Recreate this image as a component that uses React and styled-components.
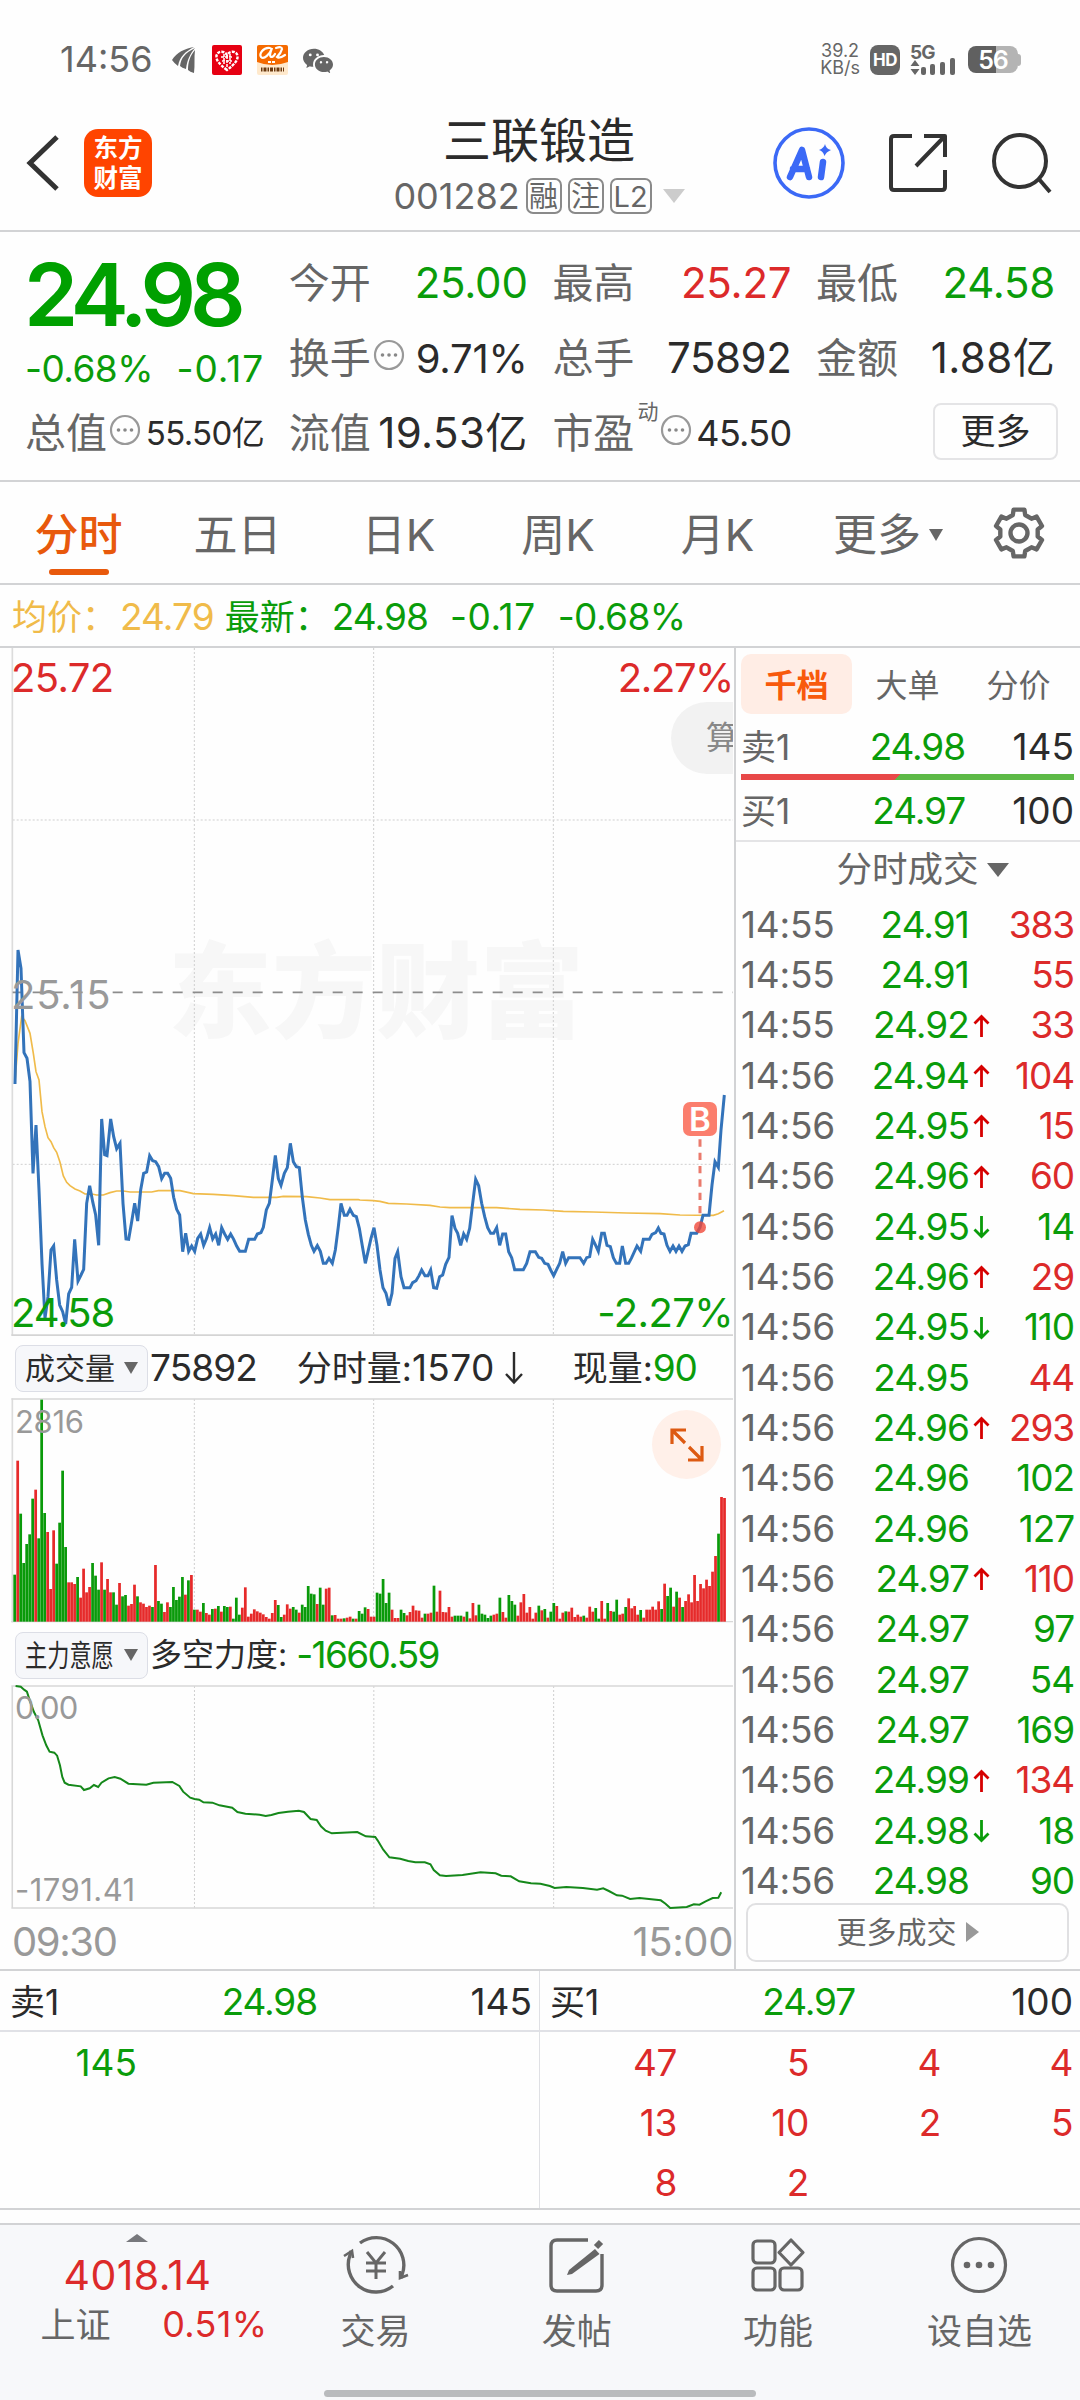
import React from "react";
import styled, { createGlobalStyle } from "styled-components";
import { BsWechat } from "react-icons/bs";

const GREEN = "#0a9c0a";
const RED = "#dc2a2a";
const GREY = "#666";
const DARK = "#2b2b2b";
const LIGHT = "#999";
const ORANGE = "#e8590c";
const LINE = "#d2d3d5";

const Global = createGlobalStyle`
  * { box-sizing: border-box; }
  body { margin: 0; background: #fdfdfd; }
`;

const Page = styled.div`
  width: 1080px;
  height: 2400px;
  display: flex;
  flex-direction: column;
  overflow: hidden;
  background: #fefefe;
  font-family: Inter, "Noto Sans CJK SC", sans-serif;
  color: ${DARK};
`;

const T = styled.span`
  display: inline-block;
  flex: none;
  font-size: ${(p) => p.$s || 37}px;
  font-weight: ${(p) => p.$w || 400};
  letter-spacing: ${(p) => (p.$ls === undefined ? -0.03 : p.$ls)}em;
  color: ${(p) => p.$c || DARK};
  line-height: 1.1;
  white-space: nowrap;
  margin-left: ${(p) => p.$ml || 0}px;
`;

const Cn = styled(T)`
  letter-spacing: ${(p) => p.$ls || 0}em;
`;

/* ---------- status bar ---------- */
const StatusBar = styled.div`
  height: 100px;
  padding: 19px 59px 0 60px;
  display: flex;
  align-items: center;
  justify-content: space-between;
`;
const StatusGroup = styled.div`
  display: flex;
  align-items: center;
  gap: ${(p) => p.$gap}px;
`;
const NetSpeed = styled.div`
  display: flex;
  flex-direction: column;
  align-items: center;
  gap: 1px;
`;
const SpeedText = styled.span`
  font-size: 18px;
  line-height: 16px;
  color: ${GREY};
`;
const HdBadge = styled.div`
  width: 30px;
  height: 30px;
  border-radius: 8px;
  background: #666;
  color: #fff;
  font-size: 17px;
  font-weight: 700;
  letter-spacing: -0.5px;
  display: flex;
  align-items: center;
  justify-content: center;
`;
const Battery = styled.div`
  width: 50px;
  height: 27px;
  border-radius: 8px;
  background: linear-gradient(90deg, #606060 56%, #b4b4b4 56%);
  color: #fff;
  font-size: 25px;
  font-weight: 600;
  letter-spacing: -1px;
  display: flex;
  align-items: center;
  justify-content: center;
`;
const BatteryTip = styled.div`
  width: 3px;
  height: 12px;
  margin-left: -10px;
  border-radius: 0 3px 3px 0;
  background: #b4b4b4;
`;

/* ---------- title bar ---------- */
const TitleBar = styled.div`
  height: 132px;
  padding: 0 28px 4px 26px;
  display: grid;
  grid-template-columns: 325px 1fr 325px;
  align-items: center;
  border-bottom: 2px solid ${LINE};
`;
const TitleSide = styled.div`
  display: flex;
  align-items: center;
  gap: ${(p) => p.$gap}px;
  justify-content: ${(p) => (p.$end ? "flex-end" : "flex-start")};
`;
const AppLogo = styled.div`
  width: 68px;
  height: 68px;
  border-radius: 14px;
  background: #ff4400;
  color: #fff;
  display: flex;
  align-items: center;
  justify-content: center;
  text-align: center;
  font-size: 24.5px;
  font-weight: 700;
  line-height: 30px;
`;
const TitleCenter = styled.div`
  display: flex;
  flex-direction: column;
  align-items: center;
  gap: 9px;
  padding-top: 5px;
`;
const CodeRow = styled.div`
  display: flex;
  align-items: center;
  gap: 6px;
`;
const Tag = styled.div`
  height: 36px;
  width: ${(p) => p.$w}px;
  border: 2px solid #8a8a8a;
  border-radius: 7px;
  color: ${GREY};
  font-size: 29px;
  line-height: 1;
  display: flex;
  align-items: center;
  justify-content: center;
`;
const Tri = styled.div`
  width: 0;
  height: 0;
  margin-left: ${(p) => p.$ml || 0}px;
  border-left: ${(p) => p.$w / 2}px solid transparent;
  border-right: ${(p) => p.$w / 2}px solid transparent;
  border-top: ${(p) => (p.$up ? 0 : p.$h)}px solid ${(p) => p.$c};
  border-bottom: ${(p) => (p.$up ? p.$h : 0)}px solid ${(p) => p.$c};
`;

/* ---------- quote ---------- */
const Quote = styled.div`
  height: 250px;
  padding: 14px 26px 0 26px;
  display: grid;
  grid-template-columns: repeat(4, 238px);
  grid-template-rows: repeat(3, 75px);
  column-gap: 25.7px;
  border-bottom: 2px solid ${LINE};
`;
const LastPrice = styled.div`
  grid-row: 1 / 3;
  display: flex;
  flex-direction: column;
  padding-top: 1px;
  margin-left: -2px;
`;
const ChangeRow = styled.div`
  display: flex;
  justify-content: space-between;
  margin-top: 6px;
  padding-left: 1px;
`;
const Cell = styled.div`
  display: flex;
  align-items: center;
  justify-content: space-between;
`;
const CellLabel = styled.div`
  display: flex;
  align-items: center;
  margin-left: -1px;
`;
const Sup = styled.span`
  align-self: flex-start;
  margin: -10px 0 0 3px;
  font-size: 21px;
  line-height: 1;
  color: ${GREY};
`;
const MoreButton = styled.div`
  margin: -5px -3px 0 auto;
  width: 125px;
  height: 57px;
  border: 2px solid #e4e4e6;
  border-radius: 8px;
  display: flex;
  align-items: center;
  justify-content: center;
`;

/* ---------- tabs ---------- */
const Tabs = styled.div`
  height: 103px;
  display: flex;
  border-bottom: 2px solid ${LINE};
`;
const Tab = styled.div`
  width: ${(p) => p.$w}px;
  display: flex;
  flex-direction: column;
  align-items: center;
  padding-top: ${(p) => p.$pt || 29}px;
`;
const TabLine = styled.div`
  display: flex;
  align-items: center;
`;
const Underline = styled.div`
  width: 60px;
  height: 6px;
  margin-top: 10px;
  border-radius: 3px;
  background: ${ORANGE};
`;
const AvgRow = styled.div`
  height: 63px;
  padding: 4px 0 0 12px;
  display: flex;
  align-items: center;
  border-bottom: 2px solid ${LINE};
`;

/* ---------- main area ---------- */
const Main = styled.div`
  height: 1323px;
  display: flex;
  border-bottom: 2px solid ${LINE};
`;
const Charts = styled.div`
  width: 736px;
  display: flex;
  flex-direction: column;
  border-right: 2px solid ${LINE};
`;
const ChartBox = styled.div`
  position: relative;
  height: ${(p) => p.$h}px;
  width: 733px;
  overflow: hidden;
  svg { display: block; }
`;
const Over = styled.div`
  position: absolute;
  left: ${(p) => (p.$l === undefined ? "auto" : p.$l + "px")};
  right: ${(p) => (p.$r === undefined ? "auto" : p.$r + "px")};
  top: ${(p) => p.$t}px;
  display: flex;
`;
const Watermark = styled.div`
  position: absolute;
  left: 168px;
  top: 284px;
  font-size: 104px;
  line-height: 120px;
  font-weight: 900;
  color: #f7f7f7;
`;
const CalcPill = styled.div`
  position: absolute;
  left: 671px;
  top: 54px;
  width: 110px;
  height: 72px;
  border-radius: 36px;
  background: #f2f2f2;
  padding: 18px 0 0 35px;
`;
const MarkerB = styled.div`
  position: absolute;
  left: 683px;
  top: 454px;
  width: 34px;
  height: 34px;
  border-radius: 7px;
  background: #fb7e6d;
  color: #fff;
  font-size: 33px;
  font-weight: 600;
  display: flex;
  align-items: center;
  justify-content: center;
`;
const ExpandButton = styled.div`
  position: absolute;
  left: 652px;
  top: 12px;
  width: 69px;
  height: 69px;
  border-radius: 50%;
  background: #fff0e9;
  display: flex;
  align-items: center;
  justify-content: center;
`;
const IndicatorRow = styled.div`
  height: 62px;
  padding: 2px 0 0 15px;
  display: flex;
  align-items: center;
`;
const Picker = styled.div`
  width: 133px;
  height: 47px;
  border: 1px solid #dcdee6;
  border-radius: 8px;
  background: #f6f7fa;
  display: flex;
  align-items: center;
  justify-content: space-between;
  padding: 0 9px 0 9px;
`;
const Squeezed = styled.div`
  width: 88px;
  transform: scaleX(0.74);
  transform-origin: 0 50%;
`;
const TimeAxis = styled.div`
  flex: 1;
  padding: 11px 1px 0 12px;
  display: flex;
  justify-content: space-between;
`;

/* ---------- order panel ---------- */
const Side = styled.div`
  width: 344px;
  padding: 6px 0 0 5px;
`;
const SideTabs = styled.div`
  display: flex;
  height: 60px;
`;
const SideTab = styled.div`
  width: 111px;
  padding-top: 3px;
  display: flex;
  align-items: center;
  justify-content: center;
  border-radius: 10px;
  background: ${(p) => (p.$on ? "#ffede5" : "transparent")};
`;
const Level = styled.div`
  height: 60px;
  padding: ${(p) => p.$pt || 0}px 6px 0 0;
  display: grid;
  grid-template-columns: 90px 134px 1fr;
  align-items: center;
  justify-items: end;
`;
const Start = styled.div`
  justify-self: start;
  display: flex;
`;
const RatioBar = styled.div`
  width: 333px;
  height: 6px;
  background: linear-gradient(135deg, #e84848 47%, #5cb946 47%);
`;
const Divider = styled.div`
  height: 2px;
  margin-left: -5px;
  background: #e4e4e6;
`;
const TicksTitle = styled.div`
  height: 58px;
  display: flex;
  align-items: center;
  justify-content: center;
  padding: 0 0 2px 24px;
`;
const Tick = styled.div`
  height: 50.34px;
  display: grid;
  grid-template-columns: 100px 128px 21px 1fr;
  align-items: center;
  justify-items: end;
  padding-right: 6px;
`;
const MoreTicks = styled.div`
  margin: -4px 0 0 5px;
  width: 323px;
  height: 59px;
  border: 2px solid #e0e0e2;
  border-radius: 10px;
  background: #fefefe;
  display: flex;
  align-items: center;
  justify-content: center;
  gap: 9px;
`;

/* ---------- queue ---------- */
const Queue = styled.div`
  height: 239px;
  display: flex;
  border-bottom: 2px solid ${LINE};
`;
const QueueSide = styled.div`
  width: 540px;
  border-right: ${(p) => (p.$line ? "1px solid #dfe0e4" : "none")};
`;
const QueueHead = styled.div`
  height: 61px;
  padding: 4px 7px 0 10px;
  display: grid;
  grid-template-columns: 90px ${(p) => p.$mid || 217}px 1fr;
  align-items: center;
  justify-items: end;
  border-bottom: 2px solid #e0e1e6;
`;
const QueueGrid = styled.div`
  padding: 1px 7px 0 5px;
  display: grid;
  grid-template-columns: repeat(4, 132px);
  grid-auto-rows: 60px;
  align-items: center;
  justify-items: end;
`;

/* ---------- bottom nav ---------- */
const Nav = styled.div`
  margin-top: 13px;
  flex: 1;
  background: #f7f8fa;
  border-top: 2px solid ${LINE};
  display: flex;
  flex-direction: column;
`;
const NavRow = styled.div`
  flex: 1;
  display: flex;
`;
const IndexBox = styled.div`
  width: 275px;
  padding-top: 9px;
  display: flex;
  flex-direction: column;
  align-items: center;
  gap: 11px;
`;
const IndexLine = styled.div`
  display: flex;
  align-items: center;
  justify-content: space-between;
  width: 227px;
  margin: -4px 0 0 33px;
`;
const NavItem = styled.div`
  width: 201.3px;
  padding-top: 10px;
  display: flex;
  flex-direction: column;
  align-items: center;
  gap: 17px;
`;
const HomeBar = styled.div`
  width: 432px;
  height: 7px;
  margin: 0 auto 3px;
  border-radius: 4px;
  background: #b9bbbd;
`;

/* ---------- icons ---------- */
const DotsIcon = styled.svg`
  margin: -8px 0 0 2px;
`;
const Dots = () => (
  <DotsIcon width="32" height="32" viewBox="0 0 32 32">
    <circle cx="16" cy="16" r="14" fill="none" stroke="#999" strokeWidth="2.2" />
    <g fill="#888">
      <circle cx="9.5" cy="16" r="1.8" />
      <circle cx="16" cy="16" r="1.8" />
      <circle cx="22.5" cy="16" r="1.8" />
    </g>
  </DotsIcon>
);

const gearPath = () => {
  const out = [];
  for (let k = 0; k < 6; k++) {
    const base = -90 + k * 60;
    [[-19, 19], [-13, 24], [13, 24], [19, 19]].forEach(([d, r]) => {
      const a = ((base + d) * Math.PI) / 180;
      out.push(`${(27 + r * Math.cos(a)).toFixed(1)} ${(27 + r * Math.sin(a)).toFixed(1)}`);
    });
  }
  return `M${out.join("L")}Z`;
};
const Gear = () => (
  <svg width="54" height="54" viewBox="0 0 54 54" fill="none" stroke="#666" strokeWidth="4.4" strokeLinejoin="round">
    <path d={gearPath()} />
    <circle cx="27" cy="27" r="8.5" />
  </svg>
);

const ArrowIcon = styled.svg`
  display: block;
  transform: ${(p) => (p.$down ? "rotate(180deg)" : "none")};
`;
const Arrow = ({ dir }) => (
  <ArrowIcon $down={dir === "d"} width="17" height="24" viewBox="0 0 17 24" fill="none" stroke={dir === "u" ? "#d60000" : GREEN} strokeWidth="2.8">
    <path d="M8.5 23V3M1.5 9.5L8.5 2.5L15.5 9.5" />
  </ArrowIcon>
);

const DownArrow = styled.svg`
  margin-left: 9px;
`;
const BrandMark = styled.svg`
  margin-left: 4px;
`;

/* ---------- data ---------- */
const pts = (s, dx = 0) =>
  s.trim().split(/\s+/).map((p) => {
    const [x, y] = p.split(",").map(Number);
    return `${x + dx},${y}`;
  }).join(" ");

const PRICE_AM = "45,552 54,150 63,205 72,458 81,475 90,545 99,820 108,675 117,870 126,1090 135,1255 144,1190 153,1050 161,1038 170,1140 179,1215 188,1235 197,1272 206,1182 215,1162 224,1018 234,1143 243,1125 251,1108 260,910 269,857 278,905 287,945 296,1036 305,657 314,764 321,767 332,657 341,710 350,746 360,730 369,910 378,1017 386,1018 395,965 404,910 413,963 422,870 431,820 440,816 449,767 458,782 467,785 476,800 485,836 494,820 503,820 512,835 521,892 530,928 539,945 548,1055 557,1000 566,1054 575,1038 584,1054 593,1015 602,1002 611,1036 620,1015 629,983 638,1017 647,1002 656,1036 665,983 674,1002 683,1018 692,1002 701,1018 710,1038 719,1054 736,1054 746,1018 764,1018 772,1002 783,998 790,982 799,930 808,910 817,840 826,766 835,836 843,856 853,820 862,803 871,730 880,785 889,800 898,803 907,892 916,960 925,1003 934,1036 942,1054 952,1037 961,1054 970,1090 978,1090 987,1075 997,1090 1006,1050 1015,980 1023,910 1033,946 1041,946 1050,928 1060,946 1069,950 1078,985 1087,1038 1096,1090";
const PRICE_PM = "24,1055 33,1015 42,983 51,1036 60,1110 69,1163 78,1180 87,1217 96,1180 105,1075 113,1055 123,1130 132,1163 150,1163 158,1148 168,1142 177,1127 185,1110 195,1127 204,1127 212,1110 221,1163 230,1165 239,1130 248,1125 257,1093 267,1072 276,947 285,985 293,1000 302,1036 311,1002 320,1018 329,985 338,910 347,838 356,857 365,910 374,950 383,983 392,1000 401,1000 410,983 419,1036 428,1002 437,1002 446,1055 455,1073 464,1109 490,1109 500,1090 510,1055 526,1055 536,1072 545,1075 554,1090 564,1093 572,1110 581,1127 590,1108 599,1090 608,1055 617,1090 626,1073 660,1073 671,1090 680,1073 689,1070 698,1018 707,1036 715,1054 725,1000 733,1000 741,1036 751,1040 760,1073 769,1090 779,1090 787,1038 797,1090 806,1090 815,1073 831,1038 842,1054 850,1018 868,1018 876,1003 887,998 895,984 903,1000 912,1002 921,1036 930,1054 939,1038 948,1054 957,1038 966,1054 975,1038 985,1034 993,1000 1010,1000 1020,982 1029,946 1047,946 1056,855 1065,785 1075,802 1083,690 1093,585";
const AVG_AM = "45,545 54,430 65,350 75,362 90,400 100,460 108,515 117,540 126,635 135,680 144,713 153,725 161,743 170,757 180,787 190,828 200,847 210,857 225,867 240,873 255,882 275,882 290,885 310,885 330,878 350,873 370,873 390,876 455,876 475,872 540,872 580,881 640,883 700,887 760,892 830,892 850,889 920,890 960,894 990,899 1075,899";
const AVG_PM = "0,900 40,902 60,904 85,910 140,912 210,916 240,921 270,923 410,923 480,928 550,930 610,934 700,936 800,939 900,941 960,945 1060,946 1075,941 1092,932";
const FORCE = "33,197 44,199 51,208 57,214 63,240 72,275 81,300 90,345 98,375 105,394 115,397 121,406 127,435 132,470 137,487 145,493 171,498 178,509 190,504 199,494 208,500 215,487 230,474 243,470 255,475 272,490 310,493 325,487 365,485 380,497 388,514 403,532 412,536 422,538 431,546 450,547 465,555 492,562 503,575 520,580 550,583 563,587 575,584 590,578 610,574 633,571 644,575 658,596 671,599 680,618 690,631 703,639 757,635 775,648 795,650 800,660 812,688 825,711 848,715 865,722 880,726 900,726 912,732 919,749 932,765 945,767 980,764 1018,756 1050,759 1062,766 1082,768 1100,783 1125,789 1145,790 1165,797 1175,803 1200,800 1235,803 1265,808 1278,804 1290,812 1307,825 1318,826 1335,836 1355,833 1380,837 1400,840 1410,850 1420,863 1455,860 1470,852 1482,853 1495,843 1510,833 1522,832 1528,816";
const VOLUME = "735G 393R 552G 700G 643G 614G 507G 480R 626G 210G 550G 607R 778R 602R 702G 579G 423G 652G 758R 758R 763R 742G 804R 717R 788R 772R 700G 738G 780G 698R 780G 748R 788R 788G 825G 760R 800G 796G 828R 823R 765R 800G 818R 822R 832R 828R 832G 706R 814G 822G 847R 818R 832G 772G 811G 801G 742G 795R 752G 736R 840G 840R 846R 820G 850R 855R 838G 837R 829G 846R 829G 832G 831R 867G 804G 855G 834R 773R 861R 852R 839R 845R 849R 854R 862R 867R 850R 811R 826G 862G 855R 824R 837R 832G 840G 849R 825G 832G 769G 792G 794G 823R 774G 825G 777R 774R 857G 856R 867R 867R 866G 864R 861R 867G 867R 844G 852G 833G 838R 861R 861R 789G 792G 748G 820G 789G 840R 865R 865R 840G 850G 857R 847R 828R 842R 843R 864R 852G 852R 849R 768G 846R 783R 847R 848R 832R 861R 858G 858G 858G 861R 846G 866R 820R 857R 825G 852G 855G 865G 858G 855R 852R 804G 847R 864R 796G 814G 825G 858R 818R 793R 849R 832R 867R 849R 828G 842R 838G 864R 846G 820G 829R 867R 849R 845G 846R 834R 862R 855R 861R 858G 864R 831R 846R 835G 867G 814R 867R 820G 844R 846G 810G 855R 852R 832G 806R 836R 829R 855R 841G 864R 840R 840R 831R 840R 815R 838G 762R 799G 774G 831R 786G 804R 832G 814R 794R 818R 736R 814R 763R 776R 750R 769R 726R 679R 612G 502R 505R".split(" ");

const TICKS = [
  ["14:55", "24.91", "", 383, 1], ["14:55", "24.91", "", 55, 1], ["14:55", "24.92", "u", 33, 1],
  ["14:56", "24.94", "u", 104, 1], ["14:56", "24.95", "u", 15, 1], ["14:56", "24.96", "u", 60, 1],
  ["14:56", "24.95", "d", 14, 0], ["14:56", "24.96", "u", 29, 1], ["14:56", "24.95", "d", 110, 0],
  ["14:56", "24.95", "", 44, 1], ["14:56", "24.96", "u", 293, 1], ["14:56", "24.96", "", 102, 0],
  ["14:56", "24.96", "", 127, 0], ["14:56", "24.97", "u", 110, 1], ["14:56", "24.97", "", 97, 0],
  ["14:56", "24.97", "", 54, 0], ["14:56", "24.97", "", 169, 0], ["14:56", "24.99", "u", 134, 1],
  ["14:56", "24.98", "d", 18, 0], ["14:56", "24.98", "", 90, 0],
];

const GridLines = ({ top, bottom }) => (
  <g stroke="#cfcfcf" strokeWidth="3" strokeDasharray="6 6">
    <path d={`M583 ${top}V${bottom}`} />
    <path d={`M1121 ${top}V${bottom}`} />
    <path d={`M1660 ${top}V${bottom}`} />
  </g>
);

const PriceChart = () => (
  <ChartBox $h={688}>
    <Watermark>东方财富</Watermark>
    <Over $l={0} $t={0}>
      <svg width="733" height="688" viewBox="0 -756 2199 2064" fill="none">
        <GridLines top={-756} bottom={1306} />
        <path d="M38 -240H2199M38 793H2199" stroke="#cfcfcf" strokeWidth="3" strokeDasharray="6 6" />
        <path d="M37 -756V1306" stroke="#dcdcdc" strokeWidth="5" />
        <path d="M34 1306H2199" stroke="#d4d4d4" strokeWidth="6" />
        <path d="M38 277H2199" stroke="#8c8c8c" strokeWidth="5" strokeDasharray="30 30" />
        <polyline points={`${pts(AVG_AM)} ${pts(AVG_PM, 1080)}`} stroke="#f0bb4a" strokeWidth="5" />
        <polyline points={`${pts(PRICE_AM)} ${pts(PRICE_PM, 1080)}`} stroke="#3373ba" strokeWidth="9" />
        <path d="M2100 940V712" stroke="#ea7a6c" strokeWidth="9" strokeDasharray="22 18" />
        <circle cx="2100" cy="982" r="18" fill="#f0493a" fillOpacity=".8" />
      </svg>
    </Over>
    <MarkerB>B</MarkerB>
    <CalcPill><Cn $s={32} $c="#888">算</Cn></CalcPill>
    <Over $l={11} $t={8}><T $s={40} $c={RED} $ls={-0.015}>25.72</T></Over>
    <Over $r={0} $t={8}><T $s={40} $c={RED} $ls={-0.035}>2.27%</T></Over>
    <Over $l={11} $t={325}><T $s={40} $c={LIGHT} $ls={0.02}>25.15</T></Over>
    <Over $l={11} $t={643}><T $s={40} $c={GREEN} $ls={-0.025}>24.58</T></Over>
    <Over $r={0} $t={643}><T $s={40} $c={GREEN} $ls={-0.015}>-2.27%</T></Over>
  </ChartBox>
);

const VolumeChart = () => (
  <ChartBox $h={225}>
    <svg width="733" height="225" viewBox="0 205 2199 675" fill="none">
      <GridLines top={208} bottom={876} />
      <path d="M37 206V878" stroke="#dcdcdc" strokeWidth="5" />
      <path d="M34 208H2199M34 876H2199" stroke="#d8d8d8" strokeWidth="4" />
      {VOLUME.map((v, i) => {
        const y = parseInt(v, 10);
        return <rect key={i} x={40 + i * 8.985} y={y} width="8.2" height={876 - y} fill={v.endsWith("R") ? "#e62a2a" : "#0a9a0a"} />;
      })}
    </svg>
    <Over $l={15} $t={7}><T $s={31} $c={LIGHT} $ls={-0.01}>2816</T></Over>
    <ExpandButton>
      <svg width="34" height="34" viewBox="0 0 34 34" fill="none" stroke="#dd5a12" strokeWidth="3.2">
        <path d="M2 16V2H16M2 2L15 15M32 18V32H18M32 32L19 19" />
      </svg>
    </ExpandButton>
  </ChartBox>
);

const ForceChart = () => (
  <ChartBox $h={224}>
    <svg width="733" height="224" viewBox="0 194 1553 672" preserveAspectRatio="none" fill="none">
      <g stroke="#cfcfcf" strokeWidth="1" strokeDasharray="2 2">
        <path d="M412 197V863M792 197V863M1173 197V863" vectorEffect="non-scaling-stroke" />
      </g>
      <g stroke="#d8d8d8" strokeWidth="1.6">
        <path d="M26 195V865M24 197H1553M24 863H1553" vectorEffect="non-scaling-stroke" />
      </g>
      <polyline points={pts(FORCE)} stroke="#15881a" strokeWidth="2" vectorEffect="non-scaling-stroke" />
    </svg>
    <Over $l={15} $t={6}><T $s={31} $c={LIGHT} $ls={-0.03}>0.00</T></Over>
    <Over $l={15} $t={188}><T $s={31} $c={LIGHT} $ls={0.015}>-1791.41</T></Over>
  </ChartBox>
);

const Stat = ({ label, value, c = DARK, s = 42, dots, sup, ls = -0.005 }) => (
  <Cell>
    <CellLabel>
      <Cn $s={41} $c={GREY}>{label}</Cn>
      {sup && <Sup>{sup}</Sup>}
      {dots && <Dots />}
    </CellLabel>
    <T $s={s} $c={c} $ls={ls}>{value}</T>
  </Cell>
);

export default function App() {
  return (
    <Page>
      <Global />
      <StatusBar>
        <StatusGroup $gap={15}>
          <T $s={36} $c={GREY} $ls={0}>14:56</T>
          <BrandMark width="26" height="28" viewBox="0 0 26 28" fill="#666">
            <path d="M1 14C6 6 13 3 23 1C14 6 9 10 7 20Q3 17 1 14Z" />
            <path d="M9 20C10 12 14 7 24 2C19 8 16 14 15 23Q11 22 9 20Z" />
            <path d="M17 24C17 16 19 10 24 4C23 12 24 19 23 27Q19 26 17 24Z" />
          </BrandMark>
          <svg width="30" height="30" viewBox="0 0 30 30">
            <rect width="30" height="30" rx="2" fill="#e60012" />
            <path d="M15 25C7 19 4 15 4.5 11C5 6 12 5 15 10C18 5 25 6 25.5 11C26 15 23 19 15 25Z" fill="none" stroke="#fff" strokeWidth="2.4" strokeDasharray="3 1.2" />
            <path d="M9 12H21M10 16H20M15 11V22M12 9V19M18 9V19" stroke="#fff" strokeWidth="1.5" strokeDasharray="3 1" />
          </svg>
          <svg width="31" height="30" viewBox="0 0 31 30">
            <rect width="31" height="30" rx="2" fill="#ffe9cc" />
            <path d="M0 2Q0 0 2 0H29Q31 0 31 2V17Q15 23 0 17Z" fill="#f56a00" />
            <path d="M13 3C6 2 2 9 4 12C7 15 13 9 15 3C13 8 12 12 15 12Q17 11 18 9M19 3Q25 1 25 4Q24 8 20 12Q22 14 28 10" fill="none" stroke="#fff" strokeWidth="2.2" strokeLinecap="round" />
            <path d="M11 17H19" stroke="#fff" strokeWidth="2" strokeDasharray="3 1" />
            <path d="M4 24.5H27" stroke="#6b3a10" strokeWidth="4" strokeDasharray="1.5 1 3 1" />
          </svg>
          <BsWechat size={30} color="#666" />
        </StatusGroup>
        <StatusGroup $gap={10}>
          <NetSpeed>
            <SpeedText>39.2</SpeedText>
            <SpeedText>KB/s</SpeedText>
          </NetSpeed>
          <HdBadge>HD</HdBadge>
          <svg width="48" height="44" viewBox="0 -6 48 44" fill="#666">
            <text x="0" y="15" fontFamily="Inter" fontSize="19" fontWeight="700" letterSpacing="-1">5G</text>
            <path d="M5 16L9.5 22H0.5ZM5 31L9.5 25H0.5Z" />
            <rect x="11" y="23" width="5" height="8" rx="2" />
            <rect x="20" y="20" width="5" height="11" rx="2" />
            <rect x="30" y="18" width="5" height="13" rx="2" />
            <rect x="40" y="14" width="5" height="17" rx="2" />
          </svg>
          <Battery>56</Battery>
          <BatteryTip />
        </StatusGroup>
      </StatusBar>

      <TitleBar>
        <TitleSide $gap={24}>
          <svg width="34" height="56" viewBox="0 0 34 56" fill="none" stroke="#333" strokeWidth="5">
            <path d="M31 2L4 28L31 54" />
          </svg>
          <AppLogo>东方<br />财富</AppLogo>
        </TitleSide>
        <TitleCenter>
          <Cn $s={48}>三联锻造</Cn>
          <CodeRow>
            <T $s={36} $c={GREY} $ls={0}>001282</T>
            <Tag $w={36}>融</Tag>
            <Tag $w={36}>注</Tag>
            <Tag $w={42}>L2</Tag>
            <Tri $w={22} $h={14} $c="#ccc" $ml={5} />
          </CodeRow>
        </TitleCenter>
        <TitleSide $gap={42} $end>
          <svg width="74" height="74" viewBox="0 0 74 74" fill="none">
            <circle cx="37" cy="37" r="34" stroke="#3b69f6" strokeWidth="3.6" />
            <path d="M18 51L30 24L37 51M21 43H35M51 36L49 51" stroke="#3b69f6" strokeWidth="6.5" strokeLinecap="round" strokeLinejoin="round" />
            <path d="M53 18Q54 23 59 24Q54 26 52.5 30Q51 25 47 24Q52 22 53 18Z" fill="#3b69f6" />
          </svg>
          <svg width="60" height="60" viewBox="0 0 60 60" fill="none" stroke="#333" strokeWidth="4" strokeLinejoin="round">
            <path d="M24 3H6Q3 3 3 6V54Q3 57 6 57H54Q57 57 57 54V37M36 3H57V24M57 3L28 33" />
          </svg>
          <svg width="62" height="62" viewBox="0 0 62 62" fill="none" stroke="#333" strokeWidth="4">
            <circle cx="30" cy="29" r="26" />
            <path d="M48 46L60 60" />
          </svg>
        </TitleSide>
      </TitleBar>

      <Quote>
        <LastPrice>
          <T $s={87} $c="#00a000" $w={600} $ls={-0.07}>24.98</T>
          <ChangeRow>
            <T $c={GREEN} $ls={-0.015}>-0.68%</T>
            <T $c={GREEN} $ls={0.025}>-0.17</T>
          </ChangeRow>
        </LastPrice>
        <Stat label="今开" value="25.00" c={GREEN} />
        <Stat label="最高" value="25.27" c={RED} />
        <Stat label="最低" value="24.58" c={GREEN} />
        <Stat label="换手" value="9.71%" dots s={40} />
        <Stat label="总手" value="75892" ls={-0.01} />
        <Stat label="金额" value="1.88亿" ls={0.01} />
        <Stat label="总值" value="55.50亿" dots s={33} ls={-0.02} />
        <Stat label="流值" value="19.53亿" ls={0.01} />
        <Stat label="市盈" value="45.50" sup="动" dots s={36} ls={-0.02} />
        <Cell><MoreButton><Cn $s={35}>更多</Cn></MoreButton></Cell>
      </Quote>

      <Tabs>
        <Tab $w={157}><Cn $s={44} $c={ORANGE} $w={500}>分时</Cn><Underline /></Tab>
        <Tab $w={161}><Cn $s={44} $c={GREY}>五日</Cn></Tab>
        <Tab $w={161}><Cn $s={44} $c={GREY}>日K</Cn></Tab>
        <Tab $w={158}><Cn $s={44} $c={GREY}>周K</Cn></Tab>
        <Tab $w={161}><Cn $s={44} $c={GREY}>月K</Cn></Tab>
        <Tab $w={180}><TabLine><Cn $s={44} $c={GREY}>更多</Cn><Tri $w={15} $h={12} $c={GREY} $ml={8} /></TabLine></Tab>
        <Tab $w={82} $pt={24}><Gear /></Tab>
      </Tabs>

      <AvgRow>
        <Cn $s={35} $c="#f0bb4a">均价：</Cn>
        <T $c="#f0bb4a" $ml={3} $ls={-0.025}>24.79</T>
        <Cn $s={35} $c={GREEN} $ml={11}>最新：</Cn>
        <T $c={GREEN} $ml={2} $ls={-0.025}>24.98</T>
        <T $c={GREEN} $ml={22} $ls={0.015}>-0.17</T>
        <T $c={GREEN} $ml={22} $ls={-0.015}>-0.68%</T>
      </AvgRow>

      <Main>
        <Charts>
          <PriceChart />
          <IndicatorRow>
            <Picker><Cn $s={30}>成交量</Cn><Tri $w={15} $h={12} $c={GREY} /></Picker>
            <T $ml={2} $ls={-0.025}>75892</T>
            <Cn $s={35} $ml={40}>分时量:</Cn>
            <T $ls={0.01}>1570</T>
            <DownArrow width="20" height="34" viewBox="0 0 20 34" fill="none" stroke={DARK} strokeWidth="2.4">
              <path d="M10 1V31M2 23L10 31.5L18 23" />
            </DownArrow>
            <Cn $s={35} $ml={49}>现量:</Cn>
            <T $c={GREEN}>90</T>
          </IndicatorRow>
          <VolumeChart />
          <IndicatorRow>
            <Picker><Squeezed><Cn $s={30}>主力意愿</Cn></Squeezed><Tri $w={15} $h={12} $c={GREY} /></Picker>
            <Cn $s={32} $ml={2}>多空力度:</Cn>
            <T $c={GREEN} $ml={9} $ls={-0.045}>-1660.59</T>
          </IndicatorRow>
          <ForceChart />
          <TimeAxis>
            <T $s={40} $c={LIGHT} $ls={-0.035}>09:30</T>
            <T $s={40} $c={LIGHT} $ls={-0.01}>15:00</T>
          </TimeAxis>
        </Charts>
        <Side>
          <SideTabs>
            <SideTab $on><Cn $s={32} $w={700} $c="#f85a0c">千档</Cn></SideTab>
            <SideTab><Cn $s={32} $c={GREY}>大单</Cn></SideTab>
            <SideTab><Cn $s={32} $c={GREY}>分价</Cn></SideTab>
          </SideTabs>
          <Level $pt={6}>
            <Start><Cn $s={35} $c={GREY}>卖1</Cn></Start><T $c={GREEN}>24.98</T><T $ls={0}>145</T>
          </Level>
          <RatioBar />
          <Level $pt={2}>
            <Start><Cn $s={35} $c={GREY}>买1</Cn></Start><T $c={GREEN}>24.97</T><T $ls={0}>100</T>
          </Level>
          <Divider />
          <TicksTitle><Cn $s={35.5} $c={GREY}>分时成交</Cn><Tri $w={22} $h={14} $c={GREY} $ml={8} /></TicksTitle>
          {TICKS.map(([t, p, d, q, up], i) => (
            <Tick key={i}>
              <Start><T $c={GREY} $ls={-0.005}>{t}</T></Start>
              <T $c={GREEN} $ls={-0.025}>{p}</T>
              <div>{d && <Arrow dir={d} />}</div>
              <T $c={up ? RED : GREEN}>{q}</T>
            </Tick>
          ))}
          <MoreTicks>
            <Cn $s={30} $c={GREY}>更多成交</Cn>
            <svg width="13" height="20" viewBox="0 0 13 20"><path d="M0 0L13 10L0 20Z" fill="#999" /></svg>
          </MoreTicks>
        </Side>
      </Main>

      <Queue>
        <QueueSide $line>
          <QueueHead><Start><Cn $s={35}>卖1</Cn></Start><T $c={GREEN}>24.98</T><T $ls={0}>145</T></QueueHead>
          <QueueGrid><T $c={GREEN} $ls={0}>145</T></QueueGrid>
        </QueueSide>
        <QueueSide>
          <QueueHead $mid={215}><Start><Cn $s={35}>买1</Cn></Start><T $c={GREEN}>24.97</T><T $ls={0}>100</T></QueueHead>
          <QueueGrid>
            {[47, 5, 4, 4, 13, 10, 2, 5, 8, 2].map((n, i) => <T key={i} $c={RED} $ls={-0.01}>{n}</T>)}
          </QueueGrid>
        </QueueSide>
      </Queue>

      <Nav>
        <NavRow>
          <IndexBox>
            <Tri $up $w={22} $h={8} $c="#77787c" />
            <T $s={41} $c={RED} $ls={0.01}>4018.14</T>
            <IndexLine><Cn $s={35} $c={GREY}>上证</Cn><T $c={RED} $s={36} $ls={0.01}>0.51%</T></IndexLine>
          </IndexBox>
          <NavItem>
            <svg width="66" height="60" viewBox="0 0 66 60" fill="none" stroke="#666" strokeWidth="3.4">
              <path d="M17 8A27.5 27.5 0 0 1 59 40L58 43M50 51A27.5 27.5 0 0 1 7 20L8 16" />
              <path d="M1 21L9 16L10 23M65 40L57 43L57 36" strokeWidth="2.6" />
              <path d="M24 17L33 28L42 17M33 28V44M23 28H43M23 36H43" strokeWidth="3" />
            </svg>
            <Cn $s={35} $c={GREY}>交易</Cn>
          </NavItem>
          <NavItem>
            <svg width="60" height="60" viewBox="0 0 60 60" fill="none" stroke="#666" strokeWidth="3.4">
              <path d="M41 5H10Q4 5 4 11V50Q4 56 10 56H49Q55 56 55 50V19" />
              <path d="M48 14L52.5 19L25 39L20 40L22 35Z" fill="#666" stroke="none" />
              <path d="M49 12L54 7" strokeWidth="6" />
            </svg>
            <Cn $s={35} $c={GREY}>发帖</Cn>
          </NavItem>
          <NavItem>
            <svg width="60" height="60" viewBox="0 0 60 60" fill="none" stroke="#666" strokeWidth="3.2" strokeLinejoin="round">
              <rect x="5" y="6" width="22" height="22" rx="4" />
              <rect x="5" y="33" width="22" height="22" rx="4" />
              <rect x="32" y="33" width="22" height="22" rx="4" />
              <path d="M43 5L55 17.5L43 30L31 17.5Z" />
            </svg>
            <Cn $s={35} $c={GREY}>功能</Cn>
          </NavItem>
          <NavItem>
            <svg width="60" height="60" viewBox="0 0 60 60" fill="none" stroke="#666" strokeWidth="3.2">
              <circle cx="30" cy="30" r="26.5" />
              <g fill="#666" stroke="none">
                <circle cx="18" cy="30" r="3.3" />
                <circle cx="30" cy="30" r="3.3" />
                <circle cx="42" cy="30" r="3.3" />
              </g>
            </svg>
            <Cn $s={35} $c={GREY}>设自选</Cn>
          </NavItem>
        </NavRow>
        <HomeBar />
      </Nav>
    </Page>
  );
}
